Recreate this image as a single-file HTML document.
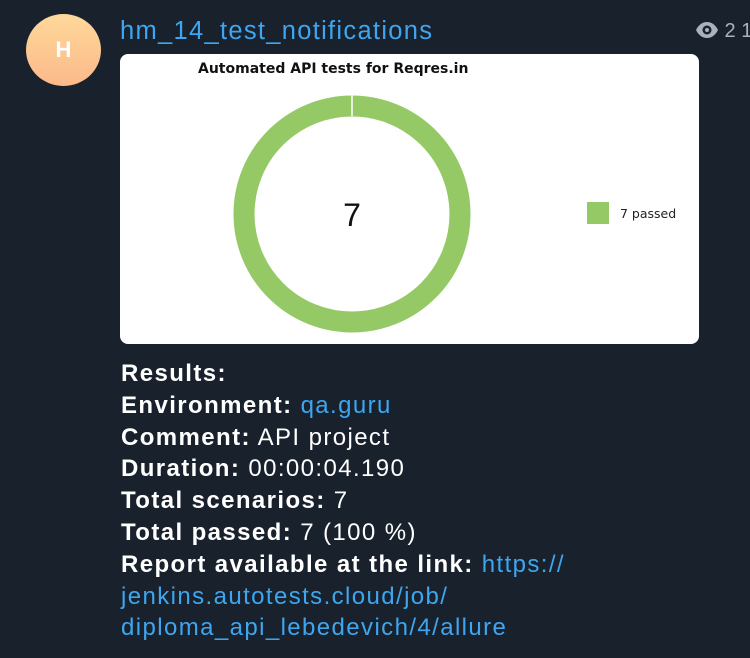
<!DOCTYPE html>
<html><head><meta charset="utf-8"><style>
body{margin:0;width:750px;height:658px;background:#18212c;overflow:hidden;font-family:"Liberation Sans",sans-serif;position:relative}
.av{position:absolute;left:26px;top:14px;width:75px;height:72px;border-radius:50%;background:linear-gradient(#ffd89a,#fbb98a);color:#fff;font-weight:bold;font-size:22px;text-align:center;line-height:72px}
.name{position:absolute;left:120px;top:17px;color:#3ea6f0;font-size:25.5px;letter-spacing:1.3px;white-space:nowrap}
.views{position:absolute;left:695px;top:20px;color:#a9b3bd;font-size:20px;white-space:nowrap}
.card{position:absolute;left:120px;top:54px;width:579px;height:290px;background:#fff;border-radius:8px;overflow:hidden}
.txt{position:absolute;left:121px;top:358px;color:#fff;font-size:24px;line-height:31.8px;letter-spacing:1.4px;white-space:nowrap}
.txt b{font-weight:bold}
.l{color:#3ea6f0}
</style></head><body>
<div class="av">H</div>
<div class="name">hm_14_test_notifications</div>
<div class="views"><svg width="24" height="18" viewBox="0 0 24 18" style="vertical-align:-2px"><path d="M1 9C4 3 8 1 12 1s8 2 11 8c-3 6-7 8-11 8S4 15 1 9z" fill="#a9b3bd"/><circle cx="12" cy="9" r="4.5" fill="#18212c"/><circle cx="12" cy="9" r="2" fill="#a9b3bd"/></svg> 2 1</div>
<div class="card">
<div style="position:absolute;left:78px;top:7px;font-family:'DejaVu Sans',sans-serif;font-size:14px;font-weight:bold;color:#111;white-space:nowrap">Automated API tests for Reqres.in</div>
<svg width="579" height="290" style="position:absolute;left:0;top:0">
<circle cx="232" cy="160" r="108" fill="none" stroke="#95c965" stroke-width="21"/>
<line x1="232" y1="40" x2="232" y2="62" stroke="#fff" stroke-width="1.5"/>
<text x="232" y="172" text-anchor="middle" font-size="32" font-family="Liberation Sans" fill="#111">7</text>
<rect x="467" y="148" width="22" height="22" fill="#95c965"/>
<text x="500" y="164" font-size="12.5" font-family="DejaVu Sans" fill="#222">7 passed</text>
</svg>
</div>
<div class="txt">
<b>Results:</b><br>
<b>Environment:</b> <span class="l">qa.guru</span><br>
<b>Comment:</b> API project<br>
<b>Duration:</b> 00:00:04.190<br>
<b>Total scenarios:</b> 7<br>
<b>Total passed:</b> 7 (100 %)<br>
<b>Report available at the link:</b> <span class="l">https://</span><br>
<span class="l">jenkins.autotests.cloud/job/</span><br>
<span class="l">diploma_api_lebedevich/4/allure</span>
</div>
</body></html>
